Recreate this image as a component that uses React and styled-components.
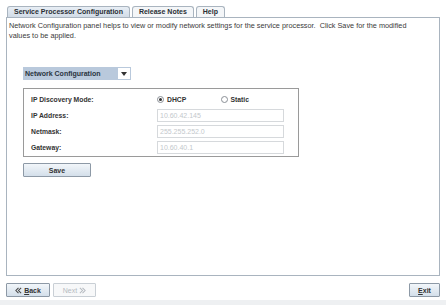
import styled, { createGlobalStyle } from "styled-components";

const Global = createGlobalStyle`
  html, body {
    margin: 0;
    padding: 0;
    background: #ffffff;
  }
  body {
    font-family: "Liberation Sans", "DejaVu Sans", sans-serif;
    color: #222;
  }
`;

const Window = styled.div`
  width: 446px;
  height: 305px;
  display: flex;
  flex-direction: column;
  background: #ffffff;
  overflow: hidden;
`;

const Main = styled.div`
  display: flex;
  flex-direction: column;
  padding: 6px 6px 0 6px;
`;

const TabBar = styled.div`
  display: flex;
  align-items: flex-end;
  gap: 2px;
  height: 11px;
  padding-left: 1px;
`;

const Tab = styled.div`
  height: 11px;
  padding: 0 6px;
  box-sizing: border-box;
  border: 1px solid #a9b4bf;
  border-bottom: none;
  border-radius: 3px 3px 0 0;
  background: ${(p) => (p.$active ? "linear-gradient(#e8eef5, #d2dce7)" : "#f4f6f8")};
  font-size: 7px;
  font-weight: bold;
  line-height: 10px;
  color: #2a2f35;
  white-space: nowrap;
`;

const Panel = styled.div`
  height: 259px;
  box-sizing: border-box;
  border: 1px solid #a9b4bf;
  padding: 3px 2px 0 2px;
  display: flex;
  flex-direction: column;
`;

const Description = styled.p`
  margin: 0;
  font-size: 7.3px;
  line-height: 10px;
  color: #3a3a3a;
  width: 418px;
`;

const Content = styled.div`
  padding: 26px 0 0 14px;
  display: flex;
  flex-direction: column;
  align-items: flex-start;
`;

const Select = styled.div`
  width: 108px;
  height: 13px;
  display: flex;
  align-items: center;
  background: #b9c9dc;
  box-sizing: border-box;
  padding-left: 2px;
  font-size: 7px;
  font-weight: bold;
  color: #2a3440;
`;

const SelectLabel = styled.span`
  flex: 1;
`;

const SelectArrow = styled.div`
  width: 12px;
  height: 11px;
  margin-right: 1px;
  background: #ffffff;
  display: flex;
  align-items: center;
  justify-content: center;
`;

const Group = styled.div`
  margin-top: 8px;
  width: 276px;
  height: 69px;
  box-sizing: border-box;
  border: 1px solid #9a9a9a;
  padding: 2px 0 0 7px;
  display: grid;
  grid-template-columns: 126px 127px;
  grid-auto-rows: 16px;
  align-items: center;
`;

const Label = styled.div`
  font-size: 6.8px;
  font-weight: bold;
  color: #333;
`;

const RadioRow = styled.div`
  display: flex;
  align-items: center;
`;

const RadioOption = styled.div`
  display: flex;
  align-items: center;
  gap: 3px;
  width: 70px;
  font-size: 6.8px;
  font-weight: bold;
  color: #333;
`;

const RadioDot = styled.span`
  width: 7px;
  height: 7px;
  box-sizing: border-box;
  border-radius: 50%;
  border: 1px solid #8a8f96;
  background: #fff;
  display: flex;
  align-items: center;
  justify-content: center;

  &::after {
    content: "";
    width: 3px;
    height: 3px;
    border-radius: 50%;
    background: ${(p) => (p.$checked ? "#333" : "transparent")};
  }
`;

const Field = styled.div`
  height: 13px;
  box-sizing: border-box;
  border: 1px solid #d6d9dc;
  padding-left: 2px;
  font-size: 7px;
  line-height: 11px;
  color: #c4c8cc;
`;

const Button = styled.div`
  width: ${(p) => p.$w}px;
  height: 14px;
  box-sizing: border-box;
  border: 1px solid #8d99a6;
  border-radius: 1px;
  background: ${(p) =>
    p.$disabled ? "#f7f8f9" : "linear-gradient(#f2f6fa, #d4dfea)"};
  border-color: ${(p) => (p.$disabled ? "#c9cfd5" : "#8d99a6")};
  display: flex;
  align-items: center;
  justify-content: center;
  gap: 2px;
  font-size: 7px;
  font-weight: ${(p) => (p.$disabled ? "normal" : "bold")};
  color: ${(p) => (p.$disabled ? "#b5bac0" : "#333")};
`;

const SaveButton = styled(Button)`
  margin-top: 6px;
`;

const Footer = styled.div`
  display: flex;
  align-items: center;
  padding: 7px 6px 0 6px;
  gap: 3px;
`;

const Spacer = styled.div`
  flex: 1;
`;

const BottomStrip = styled.div`
  margin-top: auto;
  height: 5px;
  background: #eef0f2;
`;

const U = styled.span`
  text-decoration: underline;
`;

function Chevron({ dir, color }) {
  const pts = dir === "left" ? "4,1 1,4 4,7 M7,1 4,4 7,7" : "1,1 4,4 1,7 M4,1 7,4 4,7";
  return (
    <svg width="7" height="7" viewBox="0 0 8 8">
      <path d={"M" + pts} fill="none" stroke={color} strokeWidth="1.2" />
    </svg>
  );
}

export default function App() {
  return (
    <Window>
      <Global />
      <Main>
        <TabBar>
          <Tab $active>Service Processor Configuration</Tab>
          <Tab>Release Notes</Tab>
          <Tab>Help</Tab>
        </TabBar>
        <Panel>
          <Description>
            Network Configuration panel helps to view or modify network settings for the
            service processor.&nbsp; Click Save for the modified values to be applied.
          </Description>
          <Content>
            <Select>
              <SelectLabel>Network Configuration</SelectLabel>
              <SelectArrow>
                <svg width="6" height="4" viewBox="0 0 6 4">
                  <path d="M0 0 H6 L3 4 Z" fill="#333" />
                </svg>
              </SelectArrow>
            </Select>
            <Group>
              <Label>IP Discovery Mode:</Label>
              <RadioRow>
                <RadioOption>
                  <RadioDot $checked />
                  DHCP
                </RadioOption>
                <RadioOption>
                  <RadioDot />
                  Static
                </RadioOption>
              </RadioRow>
              <Label>IP Address:</Label>
              <Field>10.60.42.145</Field>
              <Label>Netmask:</Label>
              <Field>255.255.252.0</Field>
              <Label>Gateway:</Label>
              <Field>10.60.40.1</Field>
            </Group>
            <SaveButton $w={68}>Save</SaveButton>
          </Content>
        </Panel>
      </Main>
      <Footer>
        <Button $w={44}>
          <Chevron dir="left" color="#444" />
          <span>
            <U>B</U>ack
          </span>
        </Button>
        <Button $w={43} $disabled>
          <span>Next</span>
          <Chevron dir="right" color="#b5bac0" />
        </Button>
        <Spacer />
        <Button $w={31}>
          <span>
            <U>E</U>xit
          </span>
        </Button>
      </Footer>
      <BottomStrip />
    </Window>
  );
}
